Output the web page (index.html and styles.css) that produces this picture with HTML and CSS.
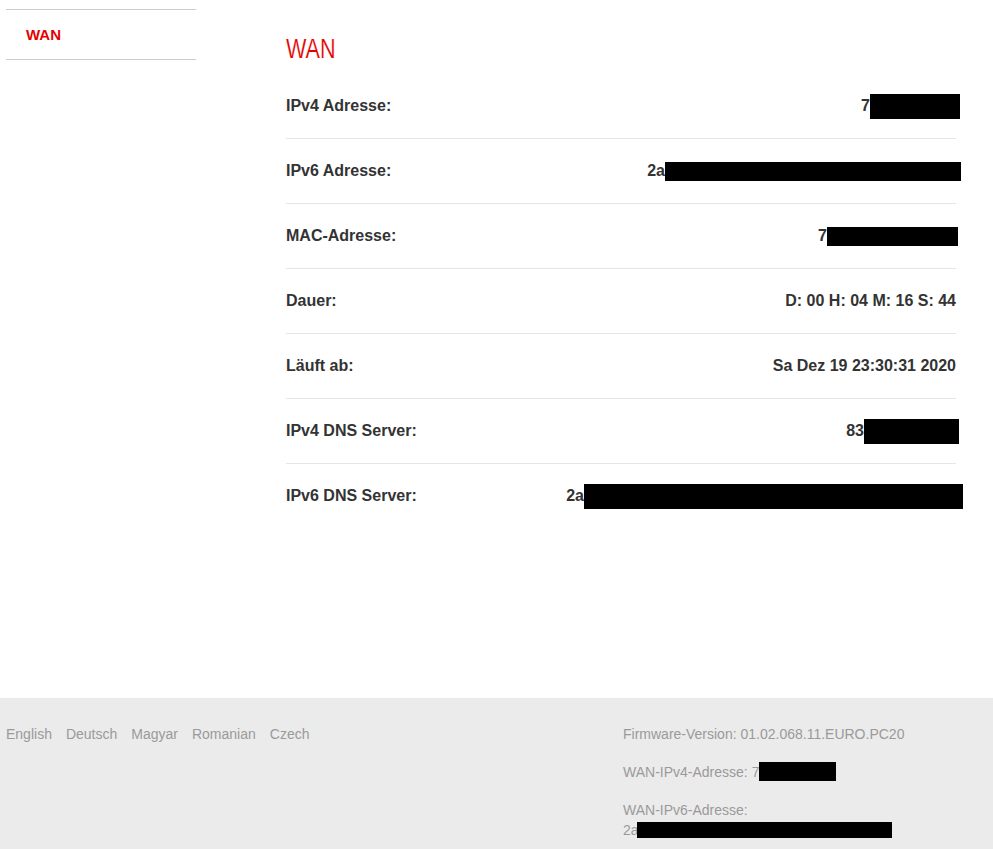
FILE: index.html
```html
<!DOCTYPE html>
<html lang="de">
<head>
<meta charset="utf-8">
<title>WAN</title>
<link rel="stylesheet" href="styles.css">
</head>
<body>
<div class="page">
  <nav class="sidebar">
    <a class="side-item active" href="#">WAN</a>
  </nav>
  <main class="main">
    <h1 class="title"><span class="title-text">WAN</span></h1>
    <div class="rows">
      <div class="row"><span class="label">IPv4 Adresse:</span><span class="value">7<span class="redact r1"></span></span></div>
      <div class="row"><span class="label">IPv6 Adresse:</span><span class="value">2a<span class="redact r2"></span></span></div>
      <div class="row"><span class="label">MAC-Adresse:</span><span class="value">7<span class="redact r3"></span></span></div>
      <div class="row"><span class="label">Dauer:</span><span class="value">D: 00 H: 04 M: 16 S: 44</span></div>
      <div class="row"><span class="label">Läuft ab:</span><span class="value">Sa Dez 19 23:30:31 2020</span></div>
      <div class="row"><span class="label">IPv4 DNS Server:</span><span class="value">83<span class="redact r6"></span></span></div>
      <div class="row last"><span class="label">IPv6 DNS Server:</span><span class="value">2a<span class="redact r7"></span></span></div>
    </div>
  </main>
</div>
<footer class="footer">
  <div class="langs">
    <a href="#">English</a>
    <a href="#">Deutsch</a>
    <a href="#">Magyar</a>
    <a href="#">Romanian</a>
    <a href="#">Czech</a>
  </div>
  <div class="info">
    <p>Firmware-Version: 01.02.068.11.EURO.PC20</p>
    <p>WAN-IPv4-Adresse: <span class="nw">7<span class="redact f1"></span></span></p>
    <p>WAN-IPv6-Adresse: <span class="nw">2a<span class="redact f2"></span></span></p>
  </div>
</footer>
</body>
</html>
```
FILE: styles.css
```css
html, body {
  margin: 0;
  padding: 0;
  background: #fff;
  font-family: "Liberation Sans", Arial, sans-serif;
}

.page {
  display: flex;
  padding: 9px 6px 0 6px;
  height: 698px;
  box-sizing: border-box;
}

.sidebar {
  width: 190px;
  flex: none;
  align-self: flex-start;
  border-top: 1px solid #cccccc;
  border-bottom: 1px solid #cccccc;
}

.side-item {
  display: flex;
  align-items: center;
  height: 49px;
  padding-left: 20px;
  font-size: 15px;
  font-weight: bold;
  color: #e60000;
  text-decoration: none;
}

.main {
  margin-left: 90px;
  width: 670px;
}

.title {
  margin: 24px 0 9px 0;
  font-weight: normal;
  font-size: 27px;
  line-height: 32px;
  color: #e60000;
}

.title-text {
  display: inline-block;
  transform: scaleX(0.8);
  transform-origin: left center;
  -webkit-text-stroke: 0.2px #fff;
}

.row {
  display: flex;
  align-items: center;
  justify-content: space-between;
  height: 64px;
  border-bottom: 1px solid #e6e6e6;
  font-size: 16px;
  font-weight: bold;
  color: #333333;
}

.row.last {
  border-bottom: none;
}

.value {
  display: flex;
  align-items: center;
}

.redact {
  display: inline-block;
  background: #000;
}

.r1 { width: 90px; height: 25px; margin-right: -4px; }
.r2 { width: 296px; height: 19px; margin-right: -5px; }
.r3 { width: 131px; height: 19px; margin-right: -2px; }
.r6 { width: 95px; height: 25px; margin-right: -3px; }
.r7 { width: 379px; height: 25px; margin-right: -7px; }

.footer {
  display: flex;
  background: #ebebeb;
  height: 151px;
  padding: 26px 0 0 6px;
  box-sizing: border-box;
  font-size: 14px;
  line-height: 20px;
  color: #9a9a9a;
}

.langs {
  width: 617px;
  flex: none;
  display: flex;
  align-items: flex-start;
  gap: 14px;
}

.langs a {
  color: #9a9a9a;
  text-decoration: none;
}

.info {
  width: 320px;
}

.info p {
  margin: 0 0 18px 0;
}

.nw {
  white-space: nowrap;
}

.f1 { width: 77px; height: 19px; vertical-align: -4px; }
.f2 { width: 255px; height: 16px; vertical-align: -3px; margin-left: -2px; }
```
